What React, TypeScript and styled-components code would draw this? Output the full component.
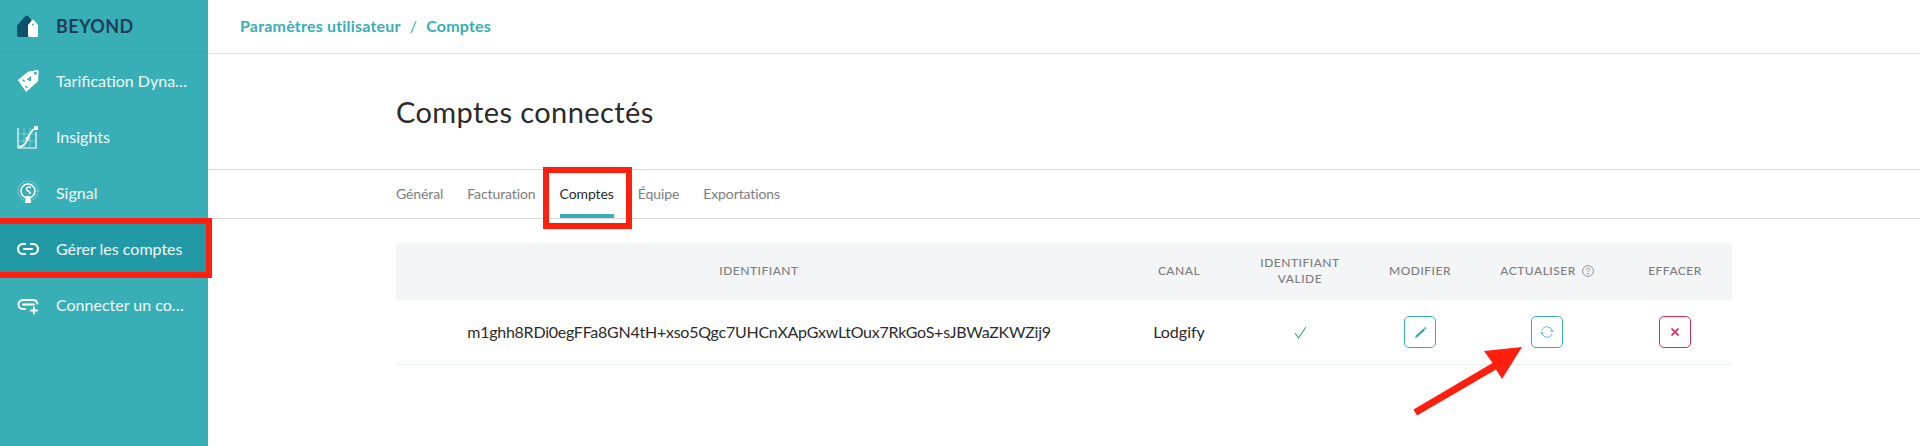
import React from 'react';
import styled, { createGlobalStyle } from 'styled-components';
import { Link2 } from 'lucide-react';

const GlobalStyle = createGlobalStyle`
  html, body {
    margin: 0;
    height: 100%;
    overflow: hidden;
    background: #fff;
    font-family: 'Lato', 'Open Sans', sans-serif;
  }
`;

const Page = styled.div`
  display: flex;
  position: relative;
  height: 446px;
  overflow: hidden;
`;

const Sidebar = styled.aside`
  width: 208px;
  flex: none;
  background: #38aeb7;
`;

const Brand = styled.div`
  display: flex;
  align-items: center;
  height: 52px;
  padding-left: 16px;
  gap: 16px;
  border-bottom: 1px solid #34a6af;
  color: #1f3d5a;
  font-size: 18px;
  font-weight: 700;
  letter-spacing: 0.4px;
`;

const NavList = styled.nav`
  display: flex;
  flex-direction: column;
`;

const NavItem = styled.div<{ $active?: boolean }>`
  display: flex;
  align-items: center;
  height: 56px;
  padding-left: 16px;
  gap: 16px;
  color: #f2fbfb;
  font-size: 16px;
  background: ${(p) => (p.$active ? '#229aa6' : 'transparent')};
`;

const NavIcon = styled.span`
  width: 24px;
  height: 24px;
  flex: none;
  display: flex;
  align-items: center;
  justify-content: center;
  color: #fff;
`;

const NavLabel = styled.span`
  width: 132px;
  padding-bottom: 2px;
  white-space: nowrap;
  overflow: hidden;
  text-overflow: ellipsis;
`;

const Main = styled.main`
  flex: 1;
  min-width: 0;
`;

const TopBar = styled.div`
  display: flex;
  align-items: center;
  box-sizing: border-box;
  height: 54px;
  padding: 0 0 2px 32px;
  gap: 7px;
  border-bottom: 1px solid #dfdfdf;
  color: #38aeb7;
  font-size: 16px;
  font-weight: 700;
  letter-spacing: 0.2px;
`;

const Slash = styled.span`
  font-weight: 400;
  margin: 0 2px;
`;

const Heading = styled.h1`
  margin: 0;
  height: 115px;
  display: flex;
  align-items: center;
  padding-left: 188px;
  color: #2b2b2b;
  font-size: 29px;
  font-weight: 400;
  letter-spacing: 0.4px;
`;

const TabBar = styled.div`
  display: flex;
  height: 48px;
  padding-left: 188px;
  gap: 24px;
  border-top: 1px solid #d8d8d8;
  border-bottom: 1px solid #d8d8d8;
`;

const Tab = styled.div<{ $active?: boolean }>`
  display: flex;
  align-items: center;
  box-sizing: border-box;
  height: 48px;
  padding: ${(p) => (p.$active ? '2px 0 0' : '0 0 2px')};
  border-bottom: ${(p) => (p.$active ? '4px solid #38aeb7' : 'none')};
  color: ${(p) => (p.$active ? '#2b2b2b' : '#7d7d7d')};
  font-size: 14px;
  letter-spacing: -0.1px;
`;

const Table = styled.div`
  width: 1336px;
  margin: 24px 0 0 188px;
`;

const Row = styled.div`
  display: grid;
  grid-template-columns: 726px 114px 128px 112px 142px 114px;
  align-items: center;
  justify-items: center;
  text-align: center;
`;

const HeadRow = styled(Row)`
  box-sizing: border-box;
  height: 57px;
  padding-bottom: 2px;
  background: #f3f5f7;
  color: #7d7d7d;
  font-size: 12px;
  font-weight: 500;
  letter-spacing: 0.5px;
  line-height: 16px;
`;

const HeadWithIcon = styled.span`
  display: flex;
  align-items: center;
  gap: 6px;
`;

const BodyRow = styled(Row)`
  height: 64px;
  border-bottom: 1px solid #edf5f5;
  color: #2b2b2b;
  font-size: 16px;
`;

const CellText = styled.span`
  padding-bottom: 2px;
`;

const Identifier = styled(CellText)`
  letter-spacing: -0.25px;
`;

const IconButton = styled.button<{ $danger?: boolean }>`
  width: 32px;
  height: 32px;
  padding: 0;
  display: flex;
  align-items: center;
  justify-content: center;
  background: #fff;
  border: 1px solid ${(p) => (p.$danger ? '#dc2f55' : '#38aeb7')};
  border-radius: 5px;
`;

const RedBox = styled.div<{ $x: number; $y: number; $w: number; $h: number }>`
  position: absolute;
  left: ${(p) => p.$x}px;
  top: ${(p) => p.$y}px;
  width: ${(p) => p.$w}px;
  height: ${(p) => p.$h}px;
  box-sizing: border-box;
  border: 6px solid #ff1f0f;
`;

const Arrow = styled.svg`
  position: absolute;
  left: 1400px;
  top: 330px;
`;

const LogoIcon = () => (
  <svg width="22" height="22" viewBox="0 0 22 22">
    <path d="M0 10.5 8.5 1c.7-.8 1.900-.8 2.600 0L14 4.500V22H2c-1.100 0-2-.9-2-2z" fill="#0e5168" />
    <path d="M11 10l4.200-5c.4-.5 1.200-.5 1.600 0L21 10v10.500c0 .8-.7 1.500-1.500 1.500h-7c-.8 0-1.500-.7-1.500-1.500z" fill="#fff" />
    <circle cx="16" cy="9.500" r="1" fill="#38aeb7" />
  </svg>
);

const TagIcon = () => (
  <svg width="26" height="26" viewBox="0 0 26 26">
    <path d="M2 12 13 3l10-2c1-.1 1.600.5 1.500 1.500L24 13 11 25z" fill="#fff" />
    <circle cx="21" cy="4.500" r="1.600" fill="#38aeb7" />
    <path d="M11.500 11l5-3.500-.5 6z" fill="#38aeb7" />
    <path d="M7 11.500l2.500 2M10 18.500l2.500 2" stroke="#38aeb7" strokeWidth="1.500" />
  </svg>
);

const ChartIcon = () => (
  <svg width="24" height="24" viewBox="0 0 24 24" fill="none" stroke="#fff">
    <path d="M2 3v20h18V7" strokeWidth="1.200" />
    <path d="M2 9h18M2 16h18M8 3v20M14 3v20" strokeWidth=".5" opacity=".6" />
    <path d="M3 22c6-1 7-4 9-9 1-3 4-8 8-10" strokeWidth="1.800" />
    <circle cx="20" cy="3" r="2.200" fill="#fff" stroke="none" />
    <circle cx="11.500" cy="13.500" r="2" fill="#fff" stroke="none" />
  </svg>
);

const SignalIcon = () => (
  <svg width="24" height="24" viewBox="0 0 24 24" fill="none" stroke="#fff">
    <circle cx="12" cy="10" r="10" strokeWidth="1" strokeDasharray="1 1.200" opacity=".8" />
    <circle cx="12" cy="10" r="7" strokeWidth="1.600" />
    <path d="M15 6.500c-3-1.500-5.500.5-4 2.500s4 1.500 3 4" strokeWidth="1.600" />
    <path d="M10 15l-1 7h6l-1-7z" fill="#fff" stroke="none" />
  </svg>
);

const LinkPlusIcon = () => (
  <svg width="24" height="24" viewBox="0 0 24 24" fill="none" stroke="#fff" strokeWidth="2" strokeLinecap="round">
    <path d="M9 16H7A4.500 4.500 0 0 1 7 7h10a4.500 4.500 0 0 1 4.400 3.500" />
    <path d="M7 11.500h11" />
    <path d="M18 14.500v6M15 17.500h6" />
  </svg>
);

const HelpIcon = () => (
  <svg width="12" height="12" viewBox="0 0 12 12" fill="none" stroke="#7d7d7d" strokeWidth=".8">
    <circle cx="6" cy="6" r="5.400" />
    <path d="M4.400 4.600C4.500 3.600 5.200 3.200 6 3.200c.9 0 1.600.6 1.600 1.400 0 1.200-1.600 1.200-1.600 2.400" />
    <circle cx="6" cy="8.700" r=".4" fill="#7d7d7d" />
  </svg>
);

const CheckIcon = () => (
  <svg width="13" height="13" viewBox="0 0 13 13" fill="none" stroke="#3aa76d" strokeWidth="1.100">
    <path d="M1 7l3.500 5L12 1" />
  </svg>
);

const PencilIcon = () => (
  <svg width="13" height="13" viewBox="0 0 13 13" fill="none" stroke="#2ea3ad">
    <path d="M1 12 L2 9.500 L9.500 2.500 L11 4 L3.500 11z" fill="#2ea3ad" stroke="none" />
    <path d="M10.500 1.500 L12 3" strokeWidth="1.400" />
  </svg>
);

const RefreshIcon = () => (
  <svg width="14" height="14" viewBox="0 0 14 14" fill="none" stroke="#5cbcc4" strokeWidth="1">
    <path d="M2 5.200A5.200 5.200 0 0 1 12 6" />
    <path d="M12 8.800A5.200 5.200 0 0 1 2 8" />
    <path d="M.3 7.600h3.400L2 9.600zM10.300 6.400h3.400L12 4.400z" fill="#38aeb7" stroke="none" />
  </svg>
);

const CrossIcon = () => (
  <svg width="8" height="8" viewBox="0 0 8 8" stroke="#dc2f55" strokeWidth="1.700">
    <path d="M.5.5l7 7M7.500.5l-7 7" />
  </svg>
);

const NAV = [
  { label: 'Tarification Dynamique', icon: <TagIcon /> },
  { label: 'Insights', icon: <ChartIcon /> },
  { label: 'Signal', icon: <SignalIcon /> },
  { label: 'Gérer les comptes', icon: <Link2 size={24} strokeWidth={2.200} />, active: true },
  { label: 'Connecter un compte', icon: <LinkPlusIcon /> },
];

const TABS = ['Général', 'Facturation', 'Comptes', 'Équipe', 'Exportations'];

const App: React.FC = () => {
  return (
    <Page>
      <GlobalStyle />
      <Sidebar>
        <Brand>
          <NavIcon>
            <LogoIcon />
          </NavIcon>
          BEYOND
        </Brand>
        <NavList>
          {NAV.map((n) => (
            <NavItem key={n.label} $active={n.active}>
              <NavIcon>{n.icon}</NavIcon>
              <NavLabel>{n.label}</NavLabel>
            </NavItem>
          ))}
        </NavList>
      </Sidebar>
      <Main>
        <TopBar>
          Paramètres utilisateur <Slash>/</Slash> Comptes
        </TopBar>
        <Heading>Comptes connectés</Heading>
        <TabBar>
          {TABS.map((t) => (
            <Tab key={t} $active={t === 'Comptes'}>
              {t}
            </Tab>
          ))}
        </TabBar>
        <Table>
          <HeadRow>
            <span>IDENTIFIANT</span>
            <span>CANAL</span>
            <span>
              IDENTIFIANT
              <br />
              VALIDE
            </span>
            <span>MODIFIER</span>
            <HeadWithIcon>
              ACTUALISER <HelpIcon />
            </HeadWithIcon>
            <span>EFFACER</span>
          </HeadRow>
          <BodyRow>
            <Identifier>m1ghh8RDi0egFFa8GN4tH+xso5Qgc7UHCnXApGxwLtOux7RkGoS+sJBWaZKWZij9</Identifier>
            <CellText>Lodgify</CellText>
            <CheckIcon />
            <IconButton>
              <PencilIcon />
            </IconButton>
            <IconButton>
              <RefreshIcon />
            </IconButton>
            <IconButton $danger>
              <CrossIcon />
            </IconButton>
          </BodyRow>
        </Table>
      </Main>
      <RedBox $x={-6} $y={218} $w={218} $h={60} />
      <RedBox $x={543} $y={167} $w={89} $h={62} />
      <Arrow width="130" height="90" viewBox="0 0 130 90" fill="#ff1f0f">
        <path d="M122 17 84 21 92.500 33 13.500 79.500 17 85.500 96 39.500 102 49z" />
      </Arrow>
    </Page>
  );
};

export default App;
